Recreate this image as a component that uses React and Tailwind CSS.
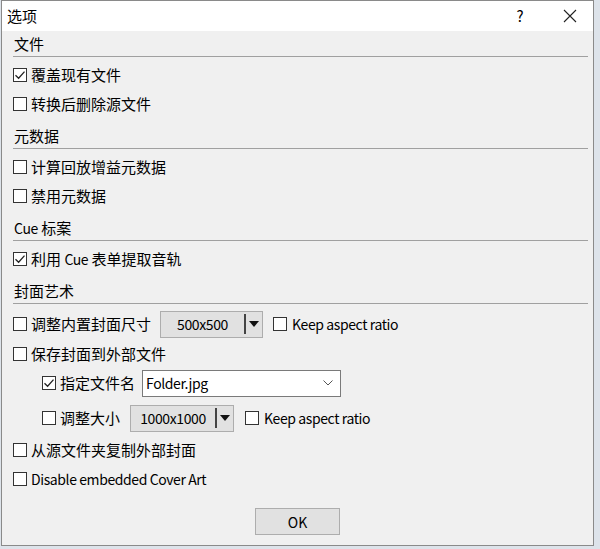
import React from 'react';

// Options dialog (选项) – Windows style settings window

// latin runs render a bit narrower than the CJK glyphs
const L = ({ children }) => <span className="text-[14px] tracking-[-0.4px]">{children}</span>;

const Check = ({ checked }) => (
  <span className="w-[14px] h-[14px] border border-[#333] bg-white flex items-center justify-center shrink-0">
    {checked && (
      <svg width="12" height="12" viewBox="0 0 12 12" fill="none">
        <path d="M1.5 6.2 L4.6 9.2 L10.5 2.6" stroke="#222" strokeWidth="1.3" />
      </svg>
    )}
  </span>
);

const CheckRow = ({ label, checked, className = 'h-[29px]', indent }) => (
  <div className={`flex items-center gap-[4px] ${indent ? 'pl-[29px]' : ''} ${className}`}>
    <Check checked={checked} />
    <span>{label}</span>
  </div>
);

const Header = ({ children, className = 'mt-[5px]' }) => (
  <div className={`h-[26px] flex items-center border-b border-[#a0a0a0] mb-[3px] pl-[1px] ${className}`}>
    {children}
  </div>
);

const SizeCombo = ({ value, width }) => (
  <div className={`h-[27px] ${width} flex items-center border border-[#adadad] bg-[#e1e1e1]`}>
    <span className="flex-1 text-center text-[14px] tracking-[-0.4px]">{value}</span>
    <span className="w-[2px] h-[20px] bg-[#444]" />
    <span className="w-[16px] flex items-center justify-center">
      <svg width="10" height="6" viewBox="0 0 10 6">
        <path d="M0 0 H10 L5 6 Z" fill="#111" />
      </svg>
    </span>
  </div>
);

export default function App() {
  return (
    <div className="w-[600px] h-[549px] bg-[#dde3ea] overflow-hidden font-['Noto_Sans_CJK_SC',sans-serif] text-[15px] leading-[20px] text-black">
      <div className="ml-[1px] w-[593px] h-[546px] border border-[#8a8a8a] bg-[#f0f0f0] flex flex-col">
        {/* title bar */}
        <div className="h-[30px] bg-white flex items-center shrink-0">
          <span className="pl-[5px] flex-1">选项</span>
          <span className="w-[40px] text-center mr-[15px]">?</span>
          <span className="w-[30px] flex justify-center mr-[8px]">
            <svg width="14" height="14" viewBox="0 0 14 14">
              <path d="M1 1 L13 13 M13 1 L1 13" stroke="#222" strokeWidth="1.1" />
            </svg>
          </span>
        </div>

        <div className="pl-[11px] pr-[5px] flex flex-col">
          <Header className="mt-0">文件</Header>
          <CheckRow checked label="覆盖现有文件" />
          <CheckRow label="转换后删除源文件" />

          <Header>元数据</Header>
          <CheckRow label="计算回放增益元数据" />
          <CheckRow label="禁用元数据" />

          <Header><L>Cue</L>&nbsp;标案</Header>
          <CheckRow checked label={<>利用 <L>Cue</L> 表单提取音轨</>} />

          <Header>封面艺术</Header>
          <div className="h-[34px] flex items-center">
            <div className="flex items-center gap-[4px]">
              <Check />
              <span>调整内置封面尺寸</span>
            </div>
            <div className="ml-[9px]">
              <SizeCombo value="500x500" width="w-[103px]" />
            </div>
            <div className="ml-[10px] flex items-center gap-[5px]">
              <Check />
              <L>Keep aspect ratio</L>
            </div>
          </div>
          <CheckRow label="保存封面到外部文件" className="h-[26px]" />
          <div className="h-[32px] flex items-center pl-[29px]">
            <div className="flex items-center gap-[4px]">
              <Check checked />
              <span>指定文件名</span>
            </div>
            <div className="ml-[7px] w-[199px] h-[27px] bg-white border border-[#7a7a7a] flex items-center pl-[3px] pr-[7px]">
              <span className="flex-1"><L>Folder.jpg</L></span>
              <svg width="10" height="6" viewBox="0 0 10 6" fill="none">
                <path d="M0.5 0.5 L5 5 L9.5 0.5" stroke="#555" strokeWidth="1" />
              </svg>
            </div>
          </div>
          <div className="h-[38px] flex items-center pl-[29px]">
            <div className="flex items-center gap-[4px]">
              <Check />
              <span>调整大小</span>
            </div>
            <div className="ml-[10px]">
              <SizeCombo value="1000x1000" width="w-[104px]" />
            </div>
            <div className="ml-[11px] flex items-center gap-[5px]">
              <Check />
              <L>Keep aspect ratio</L>
            </div>
          </div>
          <CheckRow label="从源文件夹复制外部封面" className="h-[26px]" />
          <CheckRow label={<L>Disable embedded Cover Art</L>} className="h-[32px]" />

          <div className="mt-[13px] flex justify-center pr-[6px]">
            <button className="w-[85px] h-[27px] bg-[#e1e1e1] border border-[#adadad] flex items-center justify-center text-[14px]">
              OK
            </button>
          </div>
        </div>
      </div>
    </div>
  );
}
